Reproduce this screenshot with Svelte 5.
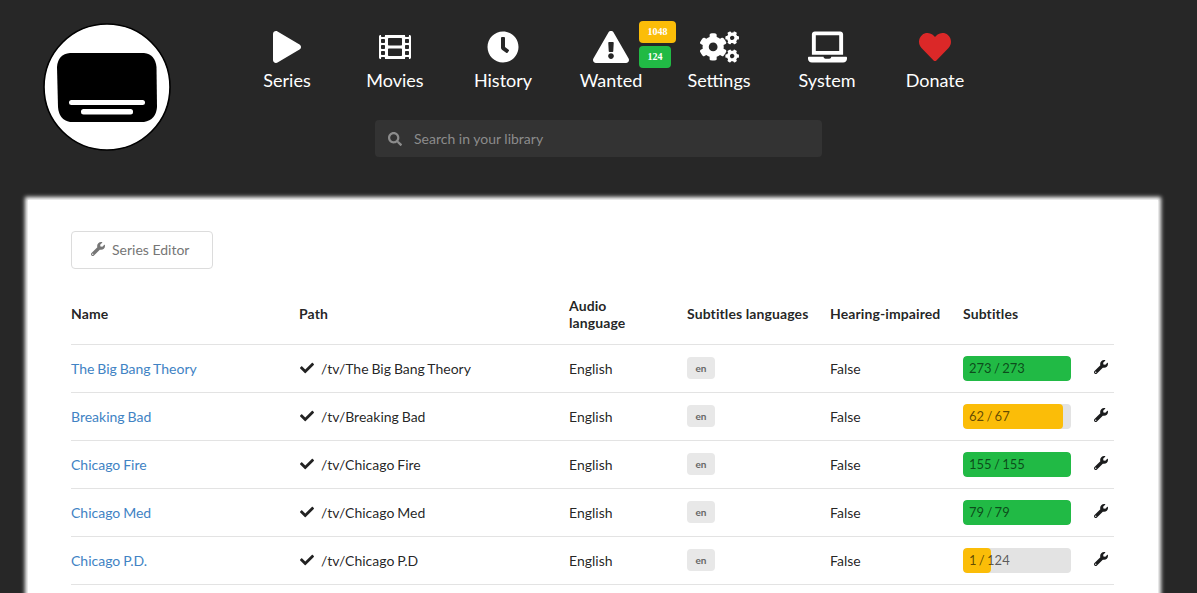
<script>
  const icons = {
    play: ["0 0 448 512", "M424.4 214.7L72.4 6.6C43.8-10.3 0 6.1 0 47.9V464c0 37.5 40.7 60.1 72.4 41.3l352-208c31.4-18.5 31.5-64.1 0-82.6z"],
    film: ["0 0 512 512", "M488 64h-8v20c0 6.6-5.4 12-12 12h-40c-6.6 0-12-5.4-12-12V64H96v20c0 6.6-5.4 12-12 12H44c-6.6 0-12-5.4-12-12V64h-8C10.7 64 0 74.7 0 88v336c0 13.3 10.7 24 24 24h8v-20c0-6.6 5.4-12 12-12h40c6.6 0 12 5.4 12 12v20h320v-20c0-6.6 5.4-12 12-12h40c6.6 0 12 5.4 12 12v20h8c13.3 0 24-10.7 24-24V88c0-13.3-10.7-24-24-24zM96 372c0 6.6-5.4 12-12 12H44c-6.6 0-12-5.4-12-12v-40c0-6.6 5.4-12 12-12h40c6.6 0 12 5.4 12 12v40zm0-96c0 6.6-5.4 12-12 12H44c-6.6 0-12-5.4-12-12v-40c0-6.6 5.4-12 12-12h40c6.6 0 12 5.4 12 12v40zm0-96c0 6.6-5.4 12-12 12H44c-6.6 0-12-5.4-12-12v-40c0-6.6 5.4-12 12-12h40c6.6 0 12 5.4 12 12v40zm272 208c0 6.6-5.4 12-12 12H156c-6.6 0-12-5.4-12-12v-96c0-6.6 5.4-12 12-12h200c6.6 0 12 5.4 12 12v96zm0-168c0 6.6-5.4 12-12 12H156c-6.6 0-12-5.4-12-12v-96c0-6.6 5.4-12 12-12h200c6.6 0 12 5.4 12 12v96zm112 152c0 6.6-5.4 12-12 12h-40c-6.6 0-12-5.4-12-12v-40c0-6.6 5.4-12 12-12h40c6.6 0 12 5.4 12 12v40zm0-96c0 6.6-5.4 12-12 12h-40c-6.6 0-12-5.4-12-12v-40c0-6.6 5.4-12 12-12h40c6.6 0 12 5.4 12 12v40zm0-96c0 6.6-5.4 12-12 12h-40c-6.6 0-12-5.4-12-12v-40c0-6.6 5.4-12 12-12h40c6.6 0 12 5.4 12 12v40z"],
    clock: ["0 0 512 512", "M256,8C119,8,8,119,8,256S119,504,256,504,504,393,504,256,393,8,256,8Zm92.49,313h0l-20,25a16,16,0,0,1-22.49,2.5h0l-67-49.72a40,40,0,0,1-15-31.23V112a16,16,0,0,1,16-16h32a16,16,0,0,1,16,16V256l58,42.5A16,16,0,0,1,348.49,321Z"],
    warning: ["0 0 576 512", "M569.517 440.013C587.975 472.007 564.806 512 527.94 512H48.054c-36.937 0-59.999-40.055-41.577-71.987L246.423 23.985c18.467-32.009 64.72-31.951 83.154 0l239.94 416.028zM288 354c-25.405 0-46 20.595-46 46s20.595 46 46 46 46-20.595 46-46-20.595-46-46-46zm-43.673-165.346l7.418 136c.347 6.364 5.609 11.346 11.982 11.346h48.546c6.373 0 11.635-4.982 11.982-11.346l7.418-136c.375-6.874-5.098-12.654-11.982-12.654h-63.383c-6.884 0-12.356 5.78-11.981 12.654z"],
    cogs: ["0 0 640 512", "M512.1 191l-8.2 14.3c-3 5.3-9.4 7.5-15.1 5.4-11.8-4.4-22.6-10.7-32.1-18.6-4.6-3.8-5.8-10.5-2.8-15.7l8.2-14.3c-6.9-8-12.3-17.3-15.9-27.4h-16.5c-6 0-11.2-4.3-12.2-10.3-2-12-2.1-24.6 0-37.1 1-6 6.2-10.4 12.2-10.4h16.5c3.6-10.1 9-19.4 15.9-27.4l-8.2-14.3c-3-5.2-1.9-11.9 2.8-15.7 9.5-7.9 20.4-14.2 32.1-18.6 5.7-2.1 12.1.1 15.1 5.4l8.2 14.3c10.5-1.9 21.2-1.9 31.7 0L552 6.3c3-5.3 9.4-7.5 15.1-5.4 11.8 4.4 22.6 10.7 32.1 18.6 4.6 3.8 5.8 10.5 2.8 15.7l-8.2 14.3c6.9 8 12.3 17.3 15.9 27.4h16.5c6 0 11.2 4.3 12.2 10.3 2 12 2.1 24.6 0 37.1-1 6-6.2 10.4-12.2 10.4h-16.5c-3.6 10.1-9 19.4-15.9 27.4l8.2 14.3c3 5.2 1.9 11.9-2.8 15.7-9.5 7.9-20.4 14.2-32.1 18.6-5.7 2.1-12.1-.1-15.1-5.4l-8.2-14.3c-10.4 1.9-21.2 1.9-31.7 0zm-10.5-58.8c38.5 29.6 82.4-14.3 52.8-52.8-38.5-29.7-82.4 14.3-52.8 52.8zM386.3 286.1l33.7 16.8c10.1 5.8 14.5 18.1 10.5 29.1-8.9 24.2-26.4 46.4-42.6 65.8-7.4 8.9-20.2 11.1-30.3 5.3l-29.1-16.8c-16 13.7-34.6 24.6-54.9 31.7v33.6c0 11.6-8.3 21.6-19.7 23.6-24.6 4.2-50.4 4.4-75.9 0-11.5-2-20-11.9-20-23.6V418c-20.3-7.2-38.9-18-54.9-31.7L74 403c-10 5.8-22.9 3.6-30.3-5.3-16.2-19.4-33.3-41.6-42.2-65.7-4-10.9.4-23.2 10.5-29.1l33.3-16.8c-3.9-20.9-3.9-42.4 0-63.4L12 205.8c-10.1-5.8-14.6-18.1-10.5-29 8.9-24.2 26-46.4 42.2-65.8 7.4-8.9 20.2-11.1 30.3-5.3l29.1 16.8c16-13.7 34.6-24.6 54.9-31.7V57.1c0-11.5 8.2-21.5 19.6-23.5 24.6-4.2 50.5-4.4 76-.1 11.5 2 20 11.9 20 23.6v33.6c20.3 7.2 38.9 18 54.9 31.7l29.1-16.8c10-5.8 22.9-3.6 30.3 5.3 16.2 19.4 33.2 41.6 42.1 65.8 4 10.9.1 23.2-10 29.1l-33.7 16.8c3.9 21 3.9 42.5 0 63.5zm-117.6 21.1c59.2-77-28.7-164.9-105.7-105.7-59.2 77 28.7 164.9 105.7 105.7zm243.4 182.7l-8.2 14.3c-3 5.3-9.4 7.5-15.1 5.4-11.8-4.4-22.6-10.7-32.1-18.6-4.6-3.8-5.8-10.5-2.8-15.7l8.2-14.3c-6.9-8-12.3-17.3-15.9-27.4h-16.5c-6 0-11.2-4.3-12.2-10.3-2-12-2.1-24.6 0-37.1 1-6 6.2-10.4 12.2-10.4h16.5c3.6-10.1 9-19.4 15.9-27.4l-8.2-14.3c-3-5.2-1.9-11.9 2.8-15.7 9.5-7.9 20.4-14.2 32.1-18.6 5.7-2.1 12.1.1 15.1 5.4l8.2 14.3c10.5-1.9 21.2-1.9 31.7 0l8.2-14.3c3-5.3 9.4-7.5 15.1-5.4 11.8 4.4 22.6 10.7 32.1 18.6 4.6 3.8 5.8 10.5 2.8 15.7l-8.2 14.3c6.9 8 12.3 17.3 15.9 27.4h16.5c6 0 11.2 4.3 12.2 10.3 2 12 2.1 24.6 0 37.1-1 6-6.2 10.4-12.2 10.4h-16.5c-3.6 10.1-9 19.4-15.9 27.4l8.2 14.3c3 5.2 1.9 11.9-2.8 15.7-9.5 7.9-20.4 14.2-32.1 18.6-5.7 2.1-12.1-.1-15.1-5.4l-8.2-14.3c-10.4 1.9-21.2 1.9-31.7 0zM501.6 431c38.5 29.6 82.4-14.3 52.8-52.8-38.5-29.6-82.4 14.3-52.8 52.8z"],
    laptop: ["0 0 640 512", "M624 416H381.54c-.74 19.81-14.71 32-32.74 32H288c-18.69 0-33.02-17.47-32.77-32H16c-8.8 0-16 7.2-16 16v16c0 35.2 28.8 64 64 64h512c35.2 0 64-28.8 64-64v-16c0-8.8-7.2-16-16-16zM576 48c0-26.4-21.6-48-48-48H112C85.6 0 64 21.6 64 48v336h512V48zm-64 272H128V64h384v256z"],
    heart: ["0 0 512 512", "M462.3 62.6C407.5 15.9 326 24.3 275.7 76.2L256 96.5l-19.7-20.3C186.1 24.3 104.5 15.9 49.7 62.6c-62.8 53.6-66.1 149.8-9.9 207.9l193.5 199.8c12.5 12.9 32.8 12.9 45.3 0l193.5-199.8c56.3-58.1 53-154.3-9.8-207.9z"]
  };
  const searchPath = "M505 442.7L405.3 343c-4.5-4.5-10.6-7-17-7H372c27.6-35.3 44-79.7 44-128C416 93.1 322.9 0 208 0S0 93.1 0 208s93.1 208 208 208c48.3 0 92.7-16.4 128-44v16.3c0 6.4 2.5 12.5 7 17l99.7 99.7c9.4 9.4 24.6 9.4 33.9 0l28.3-28.3c9.4-9.4 9.4-24.6.1-34zM208 336c-70.7 0-128-57.2-128-128 0-70.7 57.2-128 128-128 70.7 0 128 57.2 128 128 0 70.7-57.2 128-128 128z";
  const wrenchPath = "M507.73 109.1c-2.24-9.03-13.54-12.09-20.12-5.51l-74.36 74.36-67.88-11.31-11.31-67.88 74.36-74.36c6.62-6.62 3.43-17.9-5.66-20.16-47.38-11.74-99.55.91-136.58 37.93-39.64 39.64-50.55 97.1-34.05 147.2L18.74 402.76c-24.99 24.99-24.99 65.51 0 90.5 24.99 24.99 65.51 24.99 90.5 0l213.21-213.21c50.12 16.71 107.47 5.68 147.37-34.22 37.07-37.07 49.7-89.32 37.91-136.73zM64 472c-13.25 0-24-10.75-24-24 0-13.26 10.75-24 24-24s24 10.74 24 24c0 13.25-10.75 24-24 24z";
  const checkPath = "M173.898 439.404l-166.4-166.4c-9.997-9.997-9.997-26.206 0-36.204l36.203-36.204c9.997-10 26.207-10 36.204 0L192 312.69 432.095 72.596c9.997-9.997 26.207-9.997 36.204 0l36.203 36.204c9.997 9.997 9.997 26.206 0 36.204l-294.4 294.401c-9.998 9.997-26.207 9.997-36.204-.001z";

  const nav = [
    { label: "Series", icon: "play" },
    { label: "Movies", icon: "film" },
    { label: "History", icon: "clock" },
    { label: "Wanted", icon: "warning", badges: true },
    { label: "Settings", icon: "cogs" },
    { label: "System", icon: "laptop" },
    { label: "Donate", icon: "heart", red: true }
  ];

  const series = [
    { name: "The Big Bang Theory", path: "/tv/The Big Bang Theory", have: 273, total: 273 },
    { name: "Breaking Bad", path: "/tv/Breaking Bad", have: 62, total: 67, fill: 92.6 },
    { name: "Chicago Fire", path: "/tv/Chicago Fire", have: 155, total: 155 },
    { name: "Chicago Med", path: "/tv/Chicago Med", have: 79, total: 79 },
    { name: "Chicago P.D.", path: "/tv/Chicago P.D", have: 1, total: 124, fill: 25.5 }
  ];
</script>

<div class="page">
  <header class="top">
    <div class="logo">
      <svg viewBox="0 0 128 128" width="128" height="128" aria-hidden="true">
        <circle cx="64" cy="64" r="63" fill="#fff" stroke="#000" stroke-width="1.6" />
        <path d="M27 30 L101 30 Q112 31 113.5 44 L114 84 Q113 97 101 99 L27 99 Q16 97 15 84 L14 44 Q15 31 27 30 Z" fill="#000" />
        <rect x="26" y="77" width="76" height="5" rx="2.5" fill="#fff" />
        <rect x="38" y="86" width="52" height="5.5" rx="2.5" fill="#fff" />
      </svg>
    </div>
    <div class="center">
      <nav class="menu">
        {#each nav as item}
          <div class="item">
            <svg class="nav-icon" class:red={item.red} viewBox={icons[item.icon][0]} aria-hidden="true">
              <path d={icons[item.icon][1]} />
            </svg>
            <span>{item.label}</span>
            {#if item.badges}
              <b class="badge amber">1048</b>
              <b class="badge green">124</b>
            {/if}
          </div>
        {/each}
      </nav>
      <div class="search">
        <svg viewBox="0 0 512 512" width="14" height="14" aria-hidden="true"><path d={searchPath} /></svg>
        <span>Search in your library</span>
      </div>
    </div>
  </header>

  <main class="card">
    <button class="editor" type="button">
      <svg viewBox="0 0 512 512" width="14" height="14" aria-hidden="true"><path d={wrenchPath} /></svg>
      Series Editor
    </button>

    <table>
      <colgroup>
        <col style="width: 228px" />
        <col style="width: 270px" />
        <col style="width: 118px" />
        <col style="width: 143px" />
        <col style="width: 133px" />
        <col style="width: 123px" />
        <col />
      </colgroup>
      <thead>
        <tr>
          <th>Name</th>
          <th>Path</th>
          <th>Audio<br />language</th>
          <th>Subtitles languages</th>
          <th>Hearing-impaired</th>
          <th>Subtitles</th>
          <th></th>
        </tr>
      </thead>
      <tbody>
        {#each series as row}
          <tr>
            <td><span class="link">{row.name}</span></td>
            <td>
              <span class="path">
                <svg viewBox="0 0 512 512" width="14" height="14" aria-hidden="true"><path d={checkPath} /></svg>
                {row.path}
              </span>
            </td>
            <td>English</td>
            <td><span class="lang">en</span></td>
            <td>False</td>
            <td>
              <div class="progress">
                <div class="bar" class:partial={row.fill} style="width: {row.fill ?? 100}%"></div>
                <span class="count">{row.have} / {row.total}</span>
              </div>
            </td>
            <td class="tool">
              <svg viewBox="0 0 512 512" width="14" height="14" aria-hidden="true"><path d={wrenchPath} /></svg>
            </td>
          </tr>
        {/each}
      </tbody>
    </table>
  </main>
</div>

<style>
  :global(body) {
    background: #272727;
  }

  .page {
    height: 100vh;
    overflow: hidden;
    background: #272727;
    font-family: Lato, "Liberation Sans", sans-serif;
    color: rgba(0, 0, 0, 0.87);
  }

  .top {
    display: flex;
    height: 200px;
    box-sizing: border-box;
    padding: 23px 0 0 43px;
  }

  .logo {
    width: 128px;
    height: 128px;
    margin-right: 62px;
  }

  .logo svg {
    display: block;
  }

  .center {
    width: 756px;
  }

  .menu {
    display: flex;
    padding-top: 8px;
  }

  .item {
    position: relative;
    width: 108px;
    display: flex;
    flex-direction: column;
    align-items: center;
    color: #fff;
    font-size: 18px;
    line-height: 22px;
  }

  .nav-icon {
    height: 32px;
    max-width: 39px;
    margin-bottom: 6px;
    fill: #fff;
  }

  .nav-icon.red {
    fill: #db2828;
  }

  .badge {
    position: absolute;
    left: 82px;
    padding: 0 8.5px;
    height: 22px;
    border-radius: 4px;
    font: bold 10px/22px "Liberation Serif", serif;
    color: #fff;
  }

  .badge.amber {
    top: -10px;
    background: #fbbd08;
  }

  .badge.green {
    top: 15px;
    background: #21ba45;
  }

  .search {
    display: flex;
    align-items: center;
    gap: 12px;
    width: 447px;
    height: 37px;
    box-sizing: border-box;
    margin: 29px 0 0 142px;
    padding-left: 13px;
    border-radius: 4px;
    background: #333;
    font-size: 14px;
    color: #8c8c8c;
  }

  .search svg {
    fill: #8c8c8c;
  }

  /* the soft white edge comes from the shadow, the box itself starts 3px inside it */
  .card {
    margin: 0 39px 0 28px;
    min-height: 500px;
    padding: 31px 44px 0 43px;
    background: #fff;
    box-shadow: 0 0 4px 3px #fff;
    font-size: 14px;
  }

  .editor {
    display: flex;
    align-items: center;
    gap: 7px;
    width: 142px;
    height: 38px;
    padding: 0 0 2px 19px;
    border: 1px solid #dcdcdc;
    border-radius: 4px;
    background: #fff;
    font: 14px Lato, sans-serif;
    color: #767676;
  }

  .editor svg {
    fill: #767676;
  }

  table {
    width: 1043px;
    table-layout: fixed;
    border-collapse: collapse;
    margin-top: 20px;
  }

  th {
    height: 55px;
    padding: 0 0 5px;
    box-sizing: border-box;
    text-align: left;
    vertical-align: middle;
    font-size: 14px;
    font-weight: 700;
    line-height: 17px;
    letter-spacing: 0.1px;
    border-bottom: 1px solid #e3e3e3;
  }

  td {
    height: 47px;
    padding: 0;
    border-bottom: 1px solid #e3e3e3;
    vertical-align: middle;
    word-spacing: -0.7px;
  }

  .link {
    color: #4183c4;
  }

  .path {
    display: flex;
    align-items: center;
    gap: 8px;
  }

  .path svg {
    margin-left: 1px;
    margin-right: -1px;
    fill: #222;
  }

  .lang {
    display: block;
    width: 28px;
    height: 22px;
    margin-top: -1px;
    border-radius: 4px;
    background: #e8e8e8;
    color: #666;
    font-size: 10px;
    font-weight: 700;
    line-height: 22px;
    text-align: center;
  }

  .progress {
    position: relative;
    width: 108px;
    height: 25px;
    border-radius: 4px;
    background: #e3e3e3;
    overflow: hidden;
    font-size: 13px;
    line-height: 24px;
  }

  .bar {
    position: absolute;
    inset: 0 auto 0 0;
    border-radius: 4px;
    background: #21ba45;
  }

  .bar.partial {
    background: #fbbd08;
  }

  .count {
    position: relative;
    margin-left: 6px;
    color: rgba(0, 0, 0, 0.62);
    word-spacing: -1px;
  }

  .tool svg {
    display: block;
    margin: -2px 0 0 8px;
    fill: #1b1c1d;
  }
</style>
